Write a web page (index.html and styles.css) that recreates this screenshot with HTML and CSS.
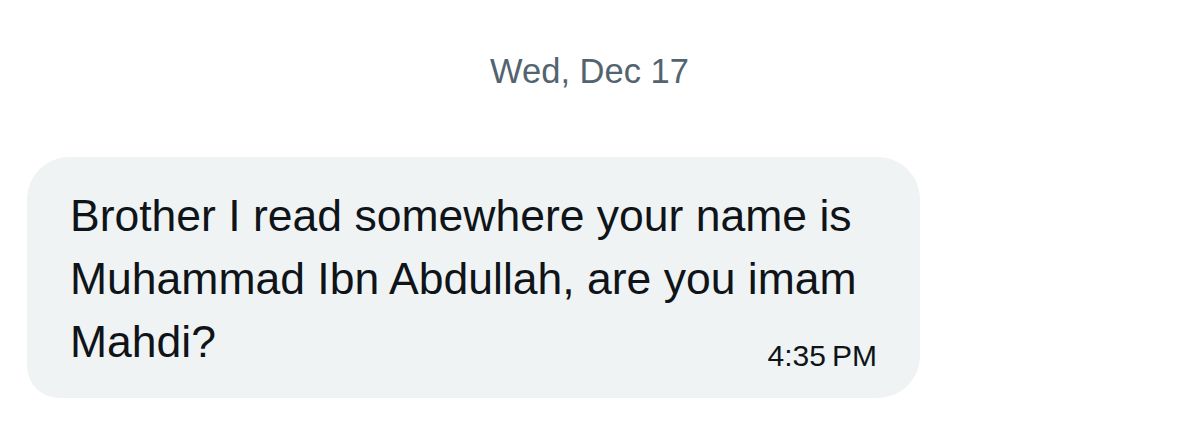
FILE: index.html
```html
<!DOCTYPE html>
<html>
<head>
<meta charset="utf-8">
<link rel="stylesheet" href="styles.css">
</head>
<body>
<div class="thread">
  <div class="date">Wed, Dec 17</div>
  <div class="bubble">
    <div class="text">Brother I read somewhere your name is<br>Muhammad Ibn Abdullah, are you imam<br>Mahdi?</div>
    <div class="time">4:35&#8201;PM</div>
  </div>
</div>
</body>
</html>
```
FILE: styles.css
```css
html, body {
  margin: 0;
  padding: 0;
  background: #ffffff;
}
body {
  width: 1179px;
  height: 435px;
  overflow: hidden;
  font-family: "Liberation Sans", Arial, sans-serif;
  color: #0f1419;
}
.thread {
  display: flex;
  flex-direction: column;
  padding-top: 51px;
}
.date {
  text-align: center;
  font-size: 34.5px;
  line-height: 40px;
  color: #536471;
  margin-bottom: 66px;
}
.bubble {
  margin-left: 27px;
  width: 893px;
  box-sizing: border-box;
  background: #eff3f4;
  border-radius: 42px 42px 42px 32px;
  padding: 27px 43px 27px 43px;
}
.text {
  font-size: 44.5px;
  line-height: 63px;
}
.time {
  text-align: right;
  font-size: 30px;
  line-height: 30px;
  margin-top: -32px;
}
```
